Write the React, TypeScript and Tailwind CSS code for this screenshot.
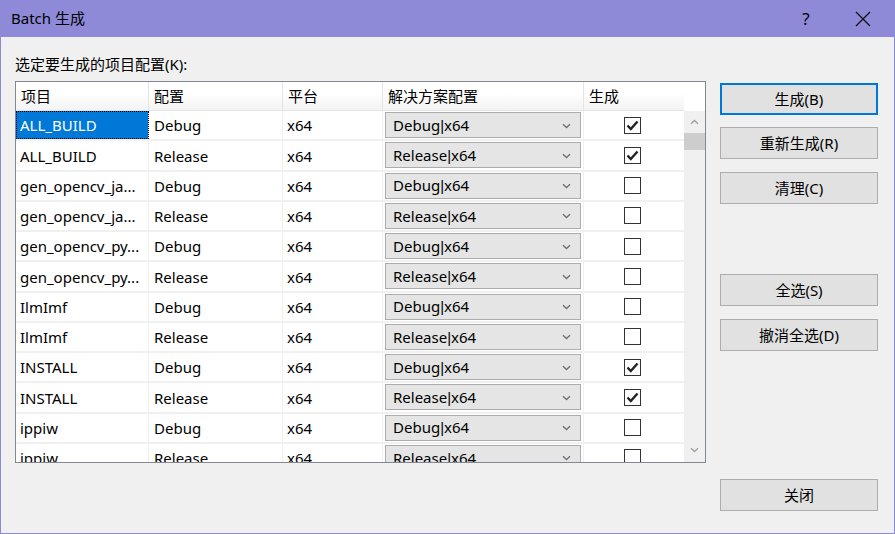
import React from "react";

const rows: { name: string; cfg: string; sol: string; build: boolean }[] = [
  { name: "ALL_BUILD", cfg: "Debug", sol: "Debug", build: true },
  { name: "ALL_BUILD", cfg: "Release", sol: "Release", build: true },
  { name: "gen_opencv_ja...", cfg: "Debug", sol: "Debug", build: false },
  { name: "gen_opencv_ja...", cfg: "Release", sol: "Release", build: false },
  { name: "gen_opencv_py...", cfg: "Debug", sol: "Debug", build: false },
  { name: "gen_opencv_py...", cfg: "Release", sol: "Release", build: false },
  { name: "IlmImf", cfg: "Debug", sol: "Debug", build: false },
  { name: "IlmImf", cfg: "Release", sol: "Release", build: false },
  { name: "INSTALL", cfg: "Debug", sol: "Debug", build: true },
  { name: "INSTALL", cfg: "Release", sol: "Release", build: true },
  { name: "ippiw", cfg: "Debug", sol: "Debug", build: false },
  { name: "ippiw", cfg: "Release", sol: "Release", build: false },
];

const Chevron = ({ up = false, color = "#707070" }: { up?: boolean; color?: string }) => (
  <svg width="9" height="6" viewBox="0 0 9 6" className={up ? "rotate-180" : ""}>
    <path d="M1 1.2 L4.5 4.5 L8 1.2" fill="none" stroke={color} strokeWidth="1.4" />
  </svg>
);

const Check = ({ on }: { on: boolean }) => (
  <div className="w-[17px] h-[17px] border border-[#333333] bg-white flex items-center justify-center">
    {on && (
      <svg width="13" height="11" viewBox="0 0 13 11">
        <path d="M1.5 5.5 L4.8 9 L11.5 1.5" fill="none" stroke="#222" strokeWidth="2.4" />
      </svg>
    )}
  </div>
);

function Btn({ label, primary = false }: { label: string; primary?: boolean }) {
  return (
    <div
      className={
        "h-[32px] w-[158px] flex items-center justify-center bg-[#e1e1e1] text-[15px] text-black " +
        (primary ? "border-2 border-[#0078d7]" : "border border-[#adadad]")
      }
    >
      {label}
    </div>
  );
}

export default function App() {
  return (
    <div
      className="w-[895px] h-[534px] bg-[#f0f0f0] border border-[#8e8ad8] border-t-0 flex flex-col overflow-hidden"
      style={{ fontFamily: '"Noto Sans", "Noto Sans CJK SC", sans-serif' }}
    >
      {/* title bar */}
      <div className="h-[37px] bg-[#8e8ad8] flex items-center shrink-0 -mx-px">
        <div className="pl-[11px] text-[15px] text-black flex-1">Batch 生成</div>
        <div className="w-[30px] text-center text-[17px] text-black mr-[22px]">?</div>
        <div className="w-[40px] h-[37px] flex items-center justify-center mr-[12px]">
          <svg width="16" height="16" viewBox="0 0 16 16">
            <path d="M1 1 L15 15 M15 1 L1 15" stroke="#111" strokeWidth="1.3" />
          </svg>
        </div>
      </div>

      {/* body */}
      <div className="flex flex-1 pl-[14px]">
        <div className="flex flex-col">
          <div className="h-[44px] pt-[16px] text-[15px] leading-[22px] text-black">选定要生成的项目配置(K):</div>
          {/* table */}
          <div className="w-[691px] h-[382px] border border-[#828790] bg-white flex overflow-hidden">
            <div className="flex flex-col w-[668px]">
              <div className="h-[29px] flex shrink-0 bg-gradient-to-b from-white from-40% to-[#f3f3f3] border-b border-[#e5e5e5] text-[15px] text-black">
                <div className="w-[133px] pl-[5px] flex items-center border-r border-[#e5e5e5]">项目</div>
                <div className="w-[134px] pl-[5px] flex items-center border-r border-[#e5e5e5]">配置</div>
                <div className="w-[100px] pl-[5px] flex items-center border-r border-[#e5e5e5]">平台</div>
                <div className="w-[201px] pl-[5px] flex items-center border-r border-[#e5e5e5]">解决方案配置</div>
                <div className="w-[100px] pl-[5px] flex items-center">生成</div>
              </div>
              {rows.map((r, i) => (
                <div key={i} className="h-[30.25px] flex shrink-0 border-b-2 border-[#f0f0f0] text-[15px] text-black">
                  <div
                    className={
                      "w-[133px] pl-[4px] pt-[1px] flex items-center whitespace-nowrap overflow-hidden border-r border-[#f0f0f0] " +
                      (i === 0 ? "bg-[#0078d7] text-white outline-1 outline-dotted outline-black -outline-offset-1" : "")
                    }
                  >
                    {r.name}
                  </div>
                  <div className="w-[134px] pl-[5px] pt-[1px] flex items-center border-r border-[#f0f0f0]">{r.cfg}</div>
                  <div className="w-[100px] pl-[4px] pt-[1px] flex items-center border-r border-[#f0f0f0]">x64</div>
                  <div className="w-[201px] flex items-center pl-[2px] border-r border-[#f0f0f0]">
                    <div className="w-[196px] h-[26px] bg-[#e5e5e5] border border-[#acacac] flex items-center pl-[7px] pr-[9px] pt-[1px]">
                      <span className="flex-1 whitespace-nowrap">
                        {r.sol}
                        <span className="font-['Liberation_Sans']">|</span>
                        x64
                      </span>
                      <Chevron />
                    </div>
                  </div>
                  <div className="w-[100px] flex items-center justify-center pr-[4px]">
                    <Check on={r.build} />
                  </div>
                </div>
              ))}
            </div>
            {/* scrollbar */}
            <div className="w-[21px] bg-[#f0f0f0] flex flex-col">
              <div className="h-[29px] shrink-0 bg-white" />
              <div className="h-[22px] flex items-center justify-center">
                <Chevron up color="#a0a0a0" />
              </div>
              <div className="h-[17px] bg-[#cdcdcd]" />
              <div className="flex-1" />
              <div className="h-[22px] flex items-center justify-center mb-[1px]">
                <Chevron color="#a0a0a0" />
              </div>
            </div>
          </div>
        </div>

        {/* buttons */}
        <div className="flex flex-col pl-[14px] pt-[46px] pb-[22px]">
          <div className="flex flex-col gap-[12px]">
            <Btn label="生成(B)" primary />
            <Btn label="重新生成(R)" />
            <div className="mt-px">
              <Btn label="清理(C)" />
            </div>
          </div>
          <div className="flex flex-col gap-[13px] mt-[70px]">
            <Btn label="全选(S)" />
            <Btn label="撤消全选(D)" />
          </div>
          <div className="flex-1" />
          <Btn label="关闭" />
        </div>
      </div>
    </div>
  );
}
